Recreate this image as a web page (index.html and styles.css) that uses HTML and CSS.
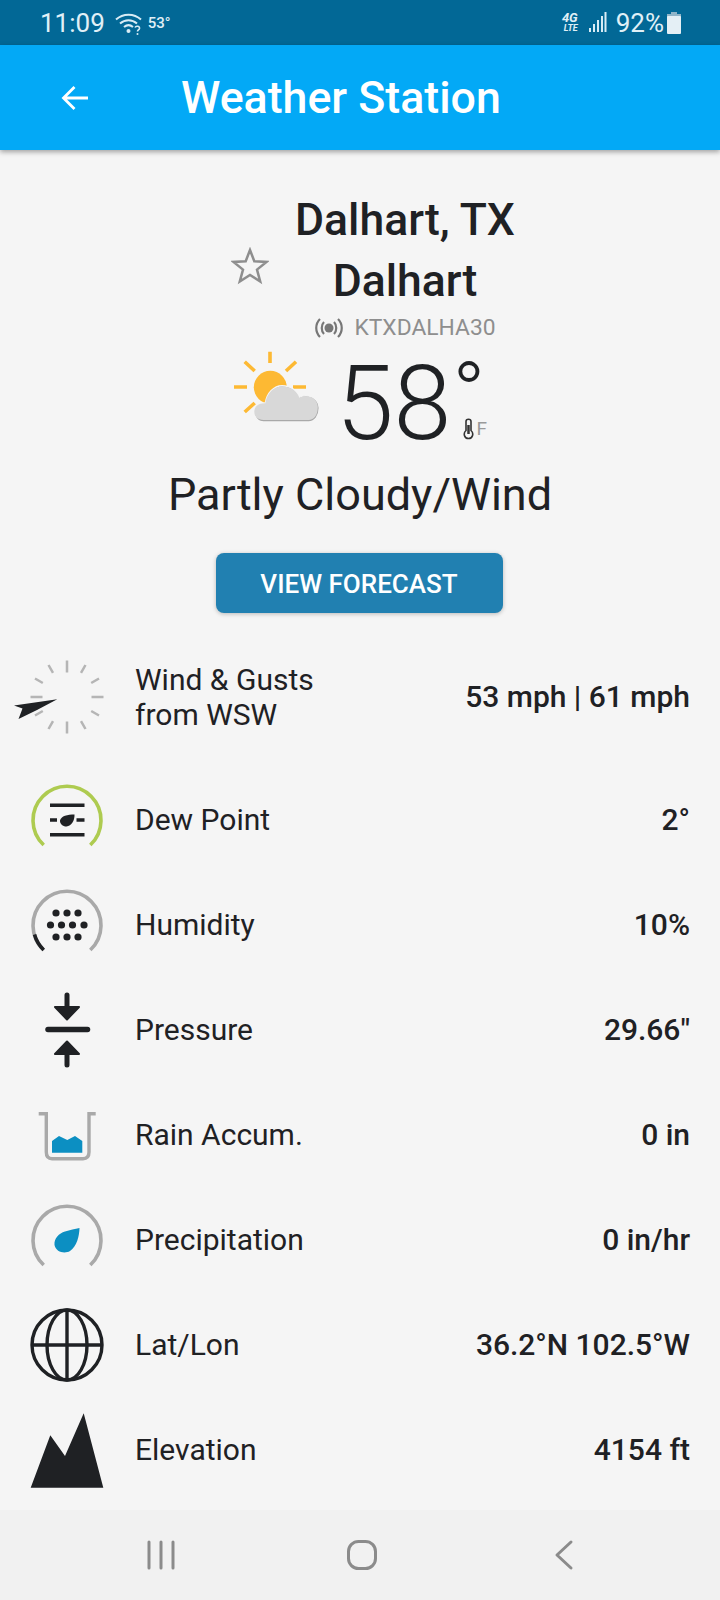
FILE: index.html
```html
<!DOCTYPE html>
<html lang="en">
<head>
<meta charset="utf-8">
<title>Weather Station</title>
<link rel="stylesheet" href="styles.css">
</head>
<body>
<div class="status">
  <div class="status-left">
    <span class="time">11:09</span>
    <svg class="wifi" width="32" height="24" viewBox="0 0 32 24"><g fill="none" stroke="#d8ecf5" stroke-width="2"><path d="M2 8.500C9 2 20 2 27 8.500"/><path d="M6 12.500C11 8 18 8 23 12.500"/><path d="M10 16C13 13.500 16 13.500 19 16"/></g><circle cx="14.500" cy="20" r="2" fill="#d8ecf5"/><path d="M21 16.500C22 14.500 26 15 25.500 17.500C25 19 23.500 19 23.500 20.500" fill="none" stroke="#d8ecf5" stroke-width="1.600"/><circle cx="23.500" cy="23" r="1" fill="#d8ecf5"/></svg>
    <span class="temp-mini">53°</span>
  </div>
  <div class="status-right">
    <span class="net"><span class="net-g">4G</span><span class="net-l">LTE</span></span>
    <svg class="signal" width="18" height="21" viewBox="0 0 18 21"><g fill="#d8ecf5"><rect x="0" y="16" width="2" height="4"/><rect x="4" y="12" width="2" height="8"/><rect x="8" y="8" width="2" height="12"/><rect x="12" y="4" width="2" height="16"/><rect x="15.500" y="0" width="2" height="20"/></g></svg>
    <span class="pct">92%</span>
    <svg class="battery" width="14" height="22" viewBox="0 0 14 22"><rect x="4" y="0" width="6" height="3" fill="#8fb4c8"/><rect x="0" y="2" width="14" height="4" fill="#8fb4c8"/><rect x="0" y="4" width="14" height="18" rx="1" fill="#e4eff5"/></svg>
  </div>
</div>
<header class="appbar">
  <svg class="back" width="32" height="32" viewBox="0 0 32 32"><path d="M28 16H4M14.500 5L3.500 16L14.500 27" fill="none" stroke="#fff" stroke-width="2.800"/></svg>
  <h1 class="title">Weather Station</h1>
</header>
<main class="main">
  <section class="head">
    <svg class="star" width="38" height="38" viewBox="0 0 38 38"><path d="M19 3L23.300 14.200L35.500 14.900L26 22.600L29.200 34.500L19 27.900L8.800 34.500L12 22.600L2.500 14.900L14.700 14.200Z" fill="none" stroke="#8e8e8e" stroke-width="2.500"/></svg>
    <div class="head-text">
      <div class="city">Dalhart, TX</div>
      <div class="city">Dalhart</div>
      <div class="station">
        <svg width="30" height="22" viewBox="0 0 30 22"><g fill="none" stroke="#777" stroke-width="2.200"><path d="M6 2C1 7 1 15 6 20"/><path d="M10 5C7 8 7 14 10 17"/><path d="M24 2C29 7 29 15 24 20"/><path d="M20 5C23 8 23 14 20 17"/></g><circle cx="15" cy="11" r="4.500" fill="#777"/></svg>
        <span>KTXDALHA30</span>
      </div>
    </div>
  </section>
  <section class="now">
    <svg class="wx" width="90" height="80" viewBox="0 0 90 80">
      <g stroke="#fdb933" stroke-width="3.600" fill="none"><path d="M38 6.700V18M2 42H15M61 42H74M12.700 16.700L22.700 26M64 16.700L54 26M12.700 67L22.700 58"/></g>
      <circle cx="38.300" cy="42.300" r="16.500" fill="#fdb933"/>
      <path d="M31.700 77C25 77 22 71 22.300 66.700C22.500 61 27 58 33.300 58.300C35 48 42 40.700 50 40.700C59 40.700 65 46 67.300 52.300C71 50.500 74 50.500 76.700 51C83 52 87.500 57 87.300 63.300C87.300 71 83 77 76.700 77Z" fill="#a9a9a9" stroke="#f5f5f5" stroke-width="1.500"/>
      <path d="M31.700 75C25.500 75 22.300 71 22.300 66.700C22.500 61 27 58 33.300 58.300C35 48 42 41.500 50 41.500C59 41.500 65 46 67.300 52.800C71 51 74 51 76.700 51.500C82 52.500 85.800 57 85.800 62C85.800 70 82 75 76.700 75Z" fill="#d8d8d8"/>
    </svg>
    <div class="temp">58<span class="deg">°</span></div>
    <div class="unit">
      <svg width="11" height="22" viewBox="0 0 11 22"><path d="M3 3.500C3 0.500 8 0.500 8 3.500V12.500C11 15 10 20.500 5.500 20.500C1 20.500 0 15 3 12.500Z" fill="none" stroke="#333" stroke-width="1.600"/><path d="M5.500 7V16" stroke="#333" stroke-width="2.500"/></svg>
      <span>F</span>
    </div>
  </section>
  <div class="condition">Partly Cloudy/Wind</div>
  <div class="cta"><button class="btn" type="button">VIEW FORECAST</button></div>
  <ul class="rows">
    <li class="row row-wind">
      <svg class="ico" width="110" height="90" viewBox="0 0 110 90">
        <g stroke="#b5b5b5" stroke-width="2.500" fill="none"><path d="M55 8.500V20.500M55 69.500V81.500M18.500 45H30.500M79.500 45H91.500M36.500 13L41 20.800M73.500 13L69 20.800M36.500 77L41 69.200M73.500 77L69 69.200M23 26.500L30.800 31M87 26.500L79.200 31M23 63.500L30.800 59M87 63.500L79.200 59"/></g>
        <path d="M2 53.500L45.300 47.300L25 58L6.500 67L10.500 56.500Z" fill="#1f2124"/>
      </svg>
      <span class="label">Wind &amp; Gusts<br>from WSW</span><span class="value">53 mph | 61 mph</span>
    </li>
    <li class="row">
      <svg class="ico" width="110" height="90" viewBox="0 0 110 90">
        <path d="M31.700 70A34 34 0 1 1 78.300 70" fill="none" stroke="#aecb50" stroke-width="3.600"/>
        <path d="M38 30.300H72.500M38 59.700H72.500M38 45H45M64.500 45H72.500" stroke="#1f2124" stroke-width="3.500" fill="none"/>
        <path d="M62.500 39.500C62.800 45.500 59.500 51 54.500 51.500C50.500 51.500 47.800 48.800 48 45.500C49 41 55.500 39.500 62.500 39.500Z" fill="#1f2124"/>
      </svg>
      <span class="label">Dew Point</span><span class="value">2°</span>
    </li>
    <li class="row">
      <svg class="ico" width="110" height="90" viewBox="0 0 110 90">
        <path d="M31.700 70A34 34 0 1 1 78.300 70" fill="none" stroke="#a9a9a9" stroke-width="3.600"/>
        <path d="M22.500 54.600A34 34 0 0 0 31.700 70" fill="none" stroke="#1f2124" stroke-width="3.600"/>
        <g fill="#1f2124"><circle cx="44" cy="33" r="3.600"/><circle cx="55" cy="33" r="3.600"/><circle cx="66" cy="33" r="3.600"/><circle cx="38.500" cy="45" r="3.600"/><circle cx="49.500" cy="45" r="3.600"/><circle cx="60.500" cy="45" r="3.600"/><circle cx="72" cy="45" r="3.600"/><circle cx="44" cy="57" r="3.600"/><circle cx="55" cy="57" r="3.600"/><circle cx="66" cy="57" r="3.600"/></g>
      </svg>
      <span class="label">Humidity</span><span class="value">10%</span>
    </li>
    <li class="row">
      <svg class="ico" width="110" height="90" viewBox="0 0 110 90">
        <path d="M36 44.500H75.500" stroke="#1f2124" stroke-width="5.500" stroke-linecap="round"/>
        <path d="M55 10V24M55 66V80" stroke="#1f2124" stroke-width="5" stroke-linecap="round"/>
        <path d="M43 22H67L55 34.500ZM43 69H67L55 56.500Z" fill="#1f2124" stroke="#1f2124" stroke-width="2" stroke-linejoin="round"/>
      </svg>
      <span class="label">Pressure</span><span class="value">29.66"</span>
    </li>
    <li class="row">
      <svg class="ico" width="110" height="90" viewBox="0 0 110 90">
        <path d="M26.700 23.700H34.300V62C34.300 66 36 68.700 40 68.700H71C75 68.700 77 66 77 62V23.700H83.700" fill="none" stroke="#a9a9a9" stroke-width="3.400"/>
        <path d="M40 62.700V51L47 46L55.300 50L63 46L70.300 51V62.700Z" fill="#0c8fc2"/>
      </svg>
      <span class="label">Rain Accum.</span><span class="value">0 in</span>
    </li>
    <li class="row">
      <svg class="ico" width="110" height="90" viewBox="0 0 110 90">
        <path d="M31.700 70A34 34 0 1 1 78.300 70" fill="none" stroke="#a9a9a9" stroke-width="3.600"/>
        <path d="M67.500 33C67.300 41 65 51 58 56C53 59 44 57.500 42.500 50C42 43 47 38.500 53 36.500C58 35 63 34 67.500 33Z" fill="#0c8fc2"/>
      </svg>
      <span class="label">Precipitation</span><span class="value">0 in/hr</span>
    </li>
    <li class="row">
      <svg class="ico" width="110" height="90" viewBox="0 0 110 90">
        <g fill="none" stroke="#1f2124" stroke-width="3.400"><circle cx="55" cy="45" r="35"/><ellipse cx="55" cy="45" rx="20" ry="35"/><path d="M55 10V80M20 45H90"/></g>
      </svg>
      <span class="label">Lat/Lon</span><span class="value">36.2°N 102.5°W</span>
    </li>
    <li class="row">
      <svg class="ico" width="110" height="90" viewBox="0 0 110 90">
        <path d="M18.700 82.700L38.300 30.300L53 51L71.700 8.300L91.300 82.700Z" fill="#1f2124"/>
      </svg>
      <span class="label">Elevation</span><span class="value">4154 ft</span>
    </li>
  </ul>
</main>
<nav class="nav">
  <svg class="nav-ico" width="30" height="32" viewBox="0 0 30 32"><path d="M3 3V29M15 3V29M27 3V29" stroke="#8b8b8b" stroke-width="3" stroke-linecap="round"/></svg>
  <svg class="nav-ico nav-home" width="34" height="34" viewBox="0 0 34 34"><rect x="3.500" y="3.500" width="27" height="27" rx="10" fill="none" stroke="#8b8b8b" stroke-width="3"/></svg>
  <svg class="nav-ico" width="20" height="32" viewBox="0 0 20 32"><path d="M17 3L3 16L17 29" fill="none" stroke="#8b8b8b" stroke-width="3" stroke-linecap="round" stroke-linejoin="round"/></svg>
</nav>
</body>
</html>
```
FILE: styles.css
```css
* { box-sizing: border-box; }
html, body { margin: 0; padding: 0; }
body {
  width: 720px;
  height: 1600px;
  overflow: hidden;
  display: flex;
  flex-direction: column;
  background: #f5f5f5;
  color: #1f2124;
  font-family: Roboto, "Liberation Sans", sans-serif;
}
.status {
  height: 45px;
  flex: none;
  background: #026896;
  color: #e0f0f7;
  display: flex;
  justify-content: space-between;
  align-items: center;
  padding: 0 39px 0 40px;
}
.status-left, .status-right { display: flex; align-items: center; }
.time { font-size: 26px; }
.wifi { margin-left: 9px; }
.temp-mini { font-size: 15px; font-weight: 500; margin-left: 2px; }
.net { display: flex; flex-direction: column; align-items: flex-end; line-height: 10px; font-style: italic; font-weight: 700; margin-right: 11px; }
.net-g { font-size: 13px; }
.net-l { font-size: 9px; }
.signal { margin-right: 9px; }
.pct { font-size: 26px; margin-right: 3px; }
.appbar {
  height: 105px;
  flex: none;
  background: #03a9f6;
  color: #fff;
  display: flex;
  align-items: center;
  padding-left: 60px;
  box-shadow: 0 2px 5px rgba(0, 0, 0, .35);
  position: relative;
}
.title { margin: 0 0 0 89px; font-size: 44.700px; font-weight: 500; }
.main { flex: 1; padding-top: 40px; }
.head { display: flex; justify-content: center; align-items: center; }
.star { margin-right: 26px; margin-top: -2px; }
.head-text { width: 220px; display: flex; flex-direction: column; align-items: center; margin-right: -26px; }
.city { font-size: 44.500px; font-weight: 500; line-height: 60.500px; white-space: nowrap; }
.station { display: flex; align-items: center; gap: 10px; height: 33px; color: #8e8e8e; font-size: 22.800px; white-space: nowrap; }
.now { display: flex; justify-content: center; align-items: center; height: 100px; margin-top: 8px; padding-right: 1px; }
.wx { margin-right: 14px; margin-top: -7px; align-self: flex-start; }
.temp { font-size: 104px; font-weight: 300; line-height: 100px; margin-top: 3px; }
.deg { font-size: 88px; line-height: 0; vertical-align: 15px; margin-left: 1px; }
.unit { align-self: flex-end; display: flex; align-items: center; gap: 3px; margin-left: -23px; margin-bottom: 12px; color: #9a9a9a; font-size: 19px; }
.condition { font-size: 45px; line-height: 60px; margin-top: 13px; text-align: center; }
.cta { display: flex; justify-content: center; margin-top: 28px; padding-right: 2px; }
.btn {
  width: 287px;
  height: 60px;
  border: 0;
  border-radius: 8px;
  padding: 2px 0 0;
  background: #2180b1;
  color: #fff;
  font-family: inherit;
  font-size: 26px;
  font-weight: 500;
  box-shadow: 0 1px 4px rgba(0, 0, 0, .25);
}
.rows { list-style: none; margin: 31px 0 0; padding: 0 30px 0 12px; }
.row { height: 105px; display: flex; align-items: center; }
.row-wind { margin-bottom: 18px; }
.ico { flex: none; margin-right: 13px; }
.label { font-size: 30px; line-height: 35px; flex: 1; }
.value { font-size: 30px; font-weight: 500; }
.nav {
  height: 90px;
  flex: none;
  background: #f1f1f1;
  display: flex;
  align-items: center;
  justify-content: space-between;
  padding: 0 146px;
}
.nav-home { margin-right: 7px; }
```
